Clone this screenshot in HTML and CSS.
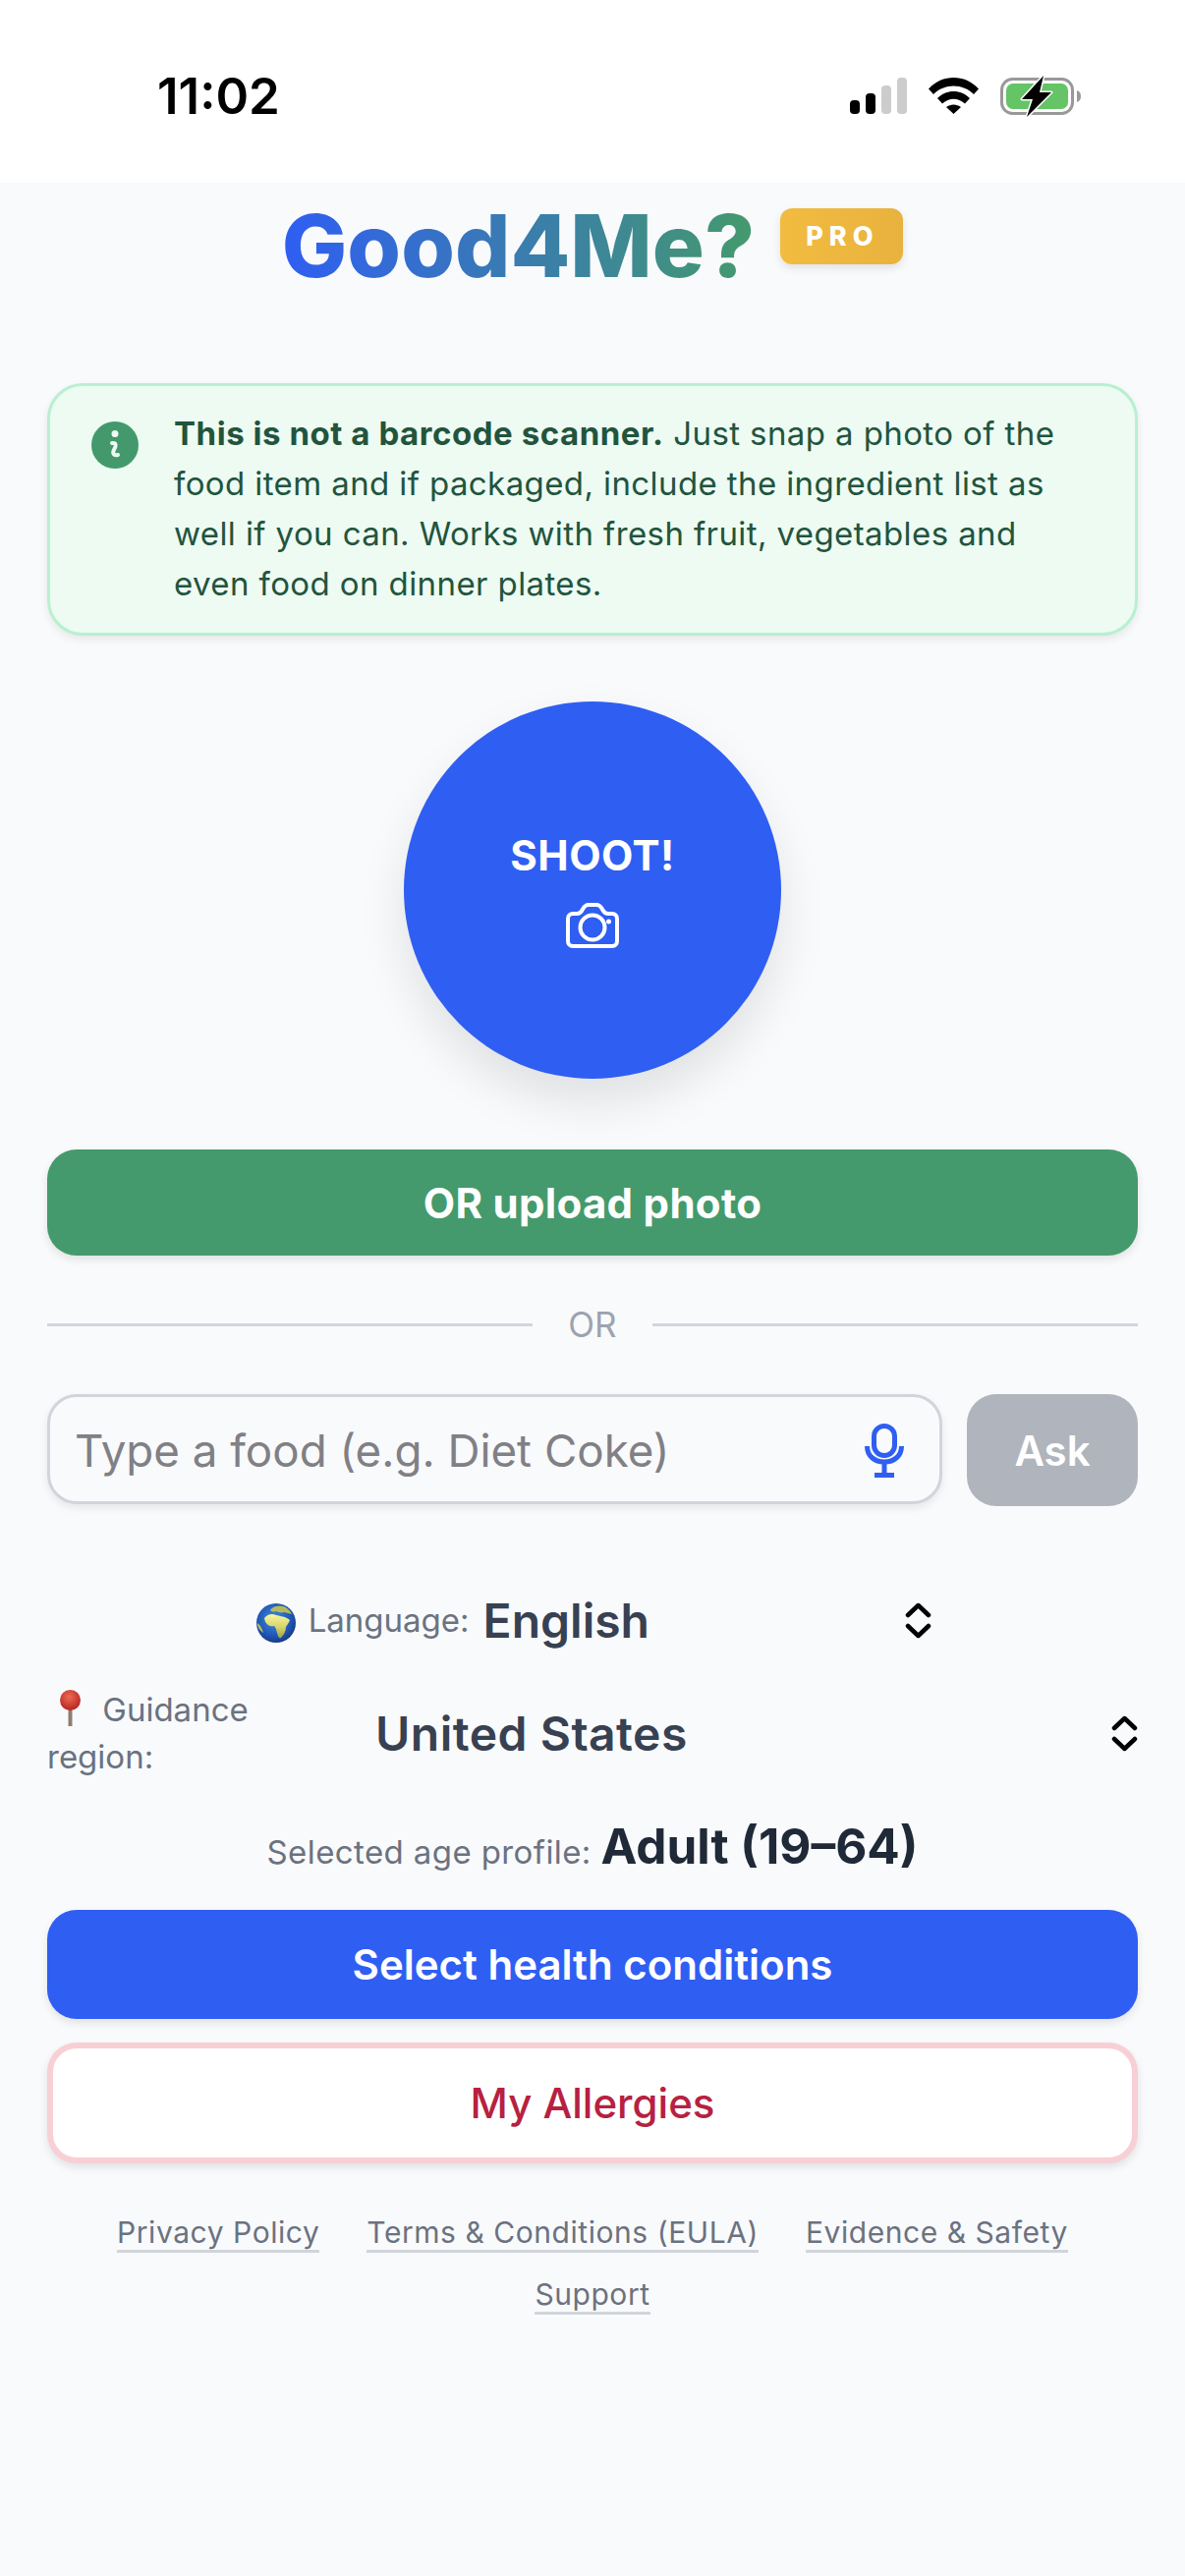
FILE: index.html
```html
<!DOCTYPE html>
<html lang="en">
<head>
  <meta charset="UTF-8">
  <meta name="viewport" content="width=device-width, initial-scale=1.0">
  <title>Good4Me?</title>
  <link rel="stylesheet" href="styles.css">
</head>
<body>

<div class="status-bar">
  <span class="time">11:02</span>
  <div class="status-icons">
    <svg class="signal" width="58" height="37" viewBox="0 0 58 37">
      <rect x="0" y="23" width="10" height="14" rx="4" fill="#000"/>
      <rect x="16" y="16" width="10" height="21" rx="4" fill="#000"/>
      <rect x="32" y="8" width="10" height="29" rx="4" fill="#ccc"/>
      <rect x="48" y="0" width="10" height="37" rx="4" fill="#ccc"/>
    </svg>
    <svg class="wifi" width="51" height="37" viewBox="0 0 51 37">
      <path d="M0 11.5 C14 -3.8 37 -3.8 51 11.5 L46 17 C35 5.5 16 5.5 5 17 Z" fill="#000"/>
      <path d="M9 21 C18 11.5 33 11.5 42 21 L37 26.500 C30 20 21 20 14 26.500 Z" fill="#000"/>
      <path d="M18 30 C22 26.500 29 26.500 33 30 L25.500 37 Z" fill="#000"/>
    </svg>
    <svg class="battery" width="82" height="42" viewBox="0 0 82 42">
      <rect x="1.500" y="3.500" width="72" height="35" rx="11" fill="none" stroke="#999" stroke-width="3"/>
      <rect x="6" y="8" width="63" height="26" rx="7" fill="#65c466"/>
      <path d="M78 15 C81 16 82 18 82 21 C82 24 81 26 78 27 Z" fill="#999"/>
      <path d="M44 0 L22 24 L33 24 L27 42 L52 17 L40 17 Z" fill="#000" stroke="#fff" stroke-width="3" stroke-linejoin="round" paint-order="stroke"/>
    </svg>
  </div>
</div>

<div class="page">
  <div class="brand">
    <h1 class="brand-title">Good4Me?</h1>
    <span class="pro-badge">PRO</span>
  </div>

  <div class="notice">
    <svg class="notice-icon" width="48" height="48" viewBox="0 0 48 48">
      <circle cx="24" cy="24" r="24" fill="#43996c"/>
      <circle cx="24" cy="12.500" r="3.500" fill="#edfbf3"/>
      <path d="M21 22 C24 21.500 25.500 23 24.500 25.500 L22.500 30 C21.500 33 23.500 35 27 34" fill="none" stroke="#edfbf3" stroke-width="4" stroke-linecap="round" stroke-linejoin="round"/>
    </svg>
    <p class="notice-text"><strong>This is not a barcode scanner.</strong> Just snap a photo of the food item and if packaged, include the ingredient list as well if you can. Works with fresh fruit, vegetables and even food on dinner plates.</p>
  </div>

  <button class="shoot">
    <span>SHOOT!</span>
    <svg width="54" height="46" viewBox="0 0 54 46" fill="none" stroke="#fff" stroke-width="4">
      <path d="M7 11 H11 C14 11 15.500 9.500 17 6.500 C18.500 3.500 20 2 23 2 H31 C34 2 35.500 3.500 37 6.500 C38.500 9.500 40 11 43 11 H47 C50 11 52 13 52 16 V39 C52 42 50 44 47 44 H7 C4 44 2 42 2 39 V16 C2 13 4 11 7 11 Z" stroke-linejoin="round"/>
      <circle cx="27" cy="25" r="12.500"/>
      <circle cx="43.500" cy="19" r="2.500" fill="#fff" stroke="none"/>
    </svg>
  </button>

  <button class="btn btn-green">OR upload photo</button>

  <div class="divider"><span>OR</span></div>

  <div class="ask-row">
    <div class="ask-input">
      <span class="placeholder">Type a food (e.g. Diet Coke)</span>
      <svg width="40" height="55" viewBox="0 0 40 55" fill="none" stroke="#2f5ef3" stroke-width="5">
        <rect x="9.500" y="2.500" width="21" height="30" rx="10.500"/>
        <path d="M2.500 23 C2.500 33 10 39 20 39 C30 39 37.500 33 37.500 23"/>
        <path d="M20 39 V51"/>
        <path d="M10 52.500 H30"/>
      </svg>
    </div>
    <button class="ask-btn">Ask</button>
  </div>

  <div class="language-row">
    <label class="field-label">
      <svg class="emoji globe" width="40" height="40" viewBox="0 0 40 40">
        <defs>
          <radialGradient id="sea" cx="45%" cy="40%" r="62%">
            <stop offset="0" stop-color="#3f8fe0"/>
            <stop offset="0.7" stop-color="#1f55b4"/>
            <stop offset="1" stop-color="#173a80"/>
          </radialGradient>
          <linearGradient id="land" x1="0" y1="0" x2="0" y2="1">
            <stop offset="0" stop-color="#f8f6a4"/>
            <stop offset="0.55" stop-color="#d6d468"/>
            <stop offset="1" stop-color="#9aa548"/>
          </linearGradient>
        </defs>
        <circle cx="20" cy="20" r="20" fill="url(#sea)"/>
        <path d="M14 7 C16 3 22 2 27 3 C31 4 34 7 36 11 C33 10 31 10 28 9 C25 10 22 9 20 8 C18 9 16 9 14 7 Z" fill="#b4ba5c"/>
        <path d="M8 15 C11 11 16 10 20 12 C23 13 27 13 31 15 L34 17 C33 20 31 22 30 24 C30 28 28 32 25 35 C23 36 22 34 21 30 C20 27 20 25 18 23 C14 24 9 22 8 15 Z" fill="url(#land)"/>
        <path d="M1 20 C4 22 6 26 7 30 C4 28 1 25 1 20 Z" fill="#b8bb58"/>
      </svg>
      Language:
    </label>
    <div class="select select-lang">
      <span>English</span>
      <svg width="27" height="37" viewBox="0 0 27 37" fill="none" stroke="#000" stroke-width="4.500" stroke-linecap="round" stroke-linejoin="round"><path d="M3 13 L13.500 3 L24 13"/><path d="M3 24 L13.500 34 L24 24"/></svg>
    </div>
  </div>

  <div class="region-row">
    <label class="field-label region-label">
      <svg class="emoji pin" width="23" height="37" viewBox="0 0 23 37">
        <defs>
          <radialGradient id="ball" cx="45%" cy="35%" r="60%">
            <stop offset="0" stop-color="#ee6a55"/>
            <stop offset="1" stop-color="#bb2a22"/>
          </radialGradient>
        </defs>
        <rect x="9.500" y="18" width="4" height="19" fill="#8d7f72"/>
        <circle cx="11.500" cy="10.500" r="10.500" fill="url(#ball)"/>
      </svg>
      Guidance region:
    </label>
    <div class="select select-region">
      <span>United States</span>
      <svg width="27" height="37" viewBox="0 0 27 37" fill="none" stroke="#000" stroke-width="4.500" stroke-linecap="round" stroke-linejoin="round"><path d="M3 13 L13.500 3 L24 13"/><path d="M3 24 L13.500 34 L24 24"/></svg>
    </div>
  </div>

  <p class="age-row">Selected age profile: <strong>Adult (19–64)</strong></p>

  <button class="btn btn-blue">Select health conditions</button>
  <button class="btn btn-allergy">My Allergies</button>

  <div class="footer-links">
    <a href="#">Privacy Policy</a>
    <a href="#">Terms &amp; Conditions (EULA)</a>
    <a href="#">Evidence &amp; Safety</a>
    <a href="#">Support</a>
  </div>
</div>

</body>
</html>
```

FILE: styles.css
```css
* {
  margin: 0;
  padding: 0;
  box-sizing: border-box;
}
body {
  font-family: Inter, "Liberation Sans", sans-serif;
  background-color: #f9fafc;
  min-height: 2622px;
}
button {
  font-family: inherit;
  border: none;
}

.status-bar {
  display: flex;
  justify-content: space-between;
  align-items: flex-start;
  height: 186px;
  padding: 73px 106px 0 160px;
  background-color: #fff;
}
.time {
  font-size: 51px;
  font-weight: 600;
  line-height: 50px;
  color: #000;
}
.status-icons {
  display: flex;
  align-items: flex-start;
  gap: 22px;
  padding-top: 6px;
}
.battery {
  margin-top: -2px;
}

.page {
  padding: 0 48px;
}

.brand {
  display: flex;
  justify-content: center;
  align-items: flex-start;
  gap: 26px;
  padding-top: 26px;
  height: 204px;
}
.brand-title {
  margin-top: -12px;
  font-size: 88.5px;
  font-weight: 800;
  line-height: 100px;
  background: linear-gradient(90deg, #2f5ef3, #449a6c);
  -webkit-background-clip: text;
  background-clip: text;
  color: transparent;
}
.pro-badge {
  display: flex;
  align-items: center;
  width: 125px;
  height: 57px;
  padding-left: 26px;
  border-radius: 12px;
  background: linear-gradient(90deg, #f2bc41, #e8b23e);
  color: #fff;
  font-size: 27px;
  font-weight: 800;
  letter-spacing: 6px;
  box-shadow: 0 4px 9px rgba(0, 0, 0, 0.1);
}

.notice {
  display: flex;
  align-items: flex-start;
  gap: 36px;
  height: 257px;
  padding: 23px 40px 0 42px;
  background-color: #edfbf3;
  border: 3px solid #b7f0d0;
  border-radius: 36px;
  box-shadow: 0 4px 9px rgba(0, 0, 0, 0.08);
}
.notice-icon {
  flex-shrink: 0;
  margin-top: 13px;
}
.notice-text {
  font-size: 33px;
  line-height: 51px;
  letter-spacing: 0.4px;
  color: #22543d;
}
.notice-text strong {
  font-weight: 700;
  letter-spacing: 0.55px;
}

.shoot {
  display: flex;
  flex-direction: column;
  align-items: center;
  gap: 23px;
  width: 384px;
  height: 384px;
  margin: 67px auto 0;
  padding-top: 132px;
  border-radius: 50%;
  background-color: #2f5ef3;
  color: #fff;
  font-size: 42px;
  font-weight: 700;
  letter-spacing: 0.5px;
  box-shadow: 0 24px 48px rgba(0, 0, 0, 0.1);
}
.shoot span {
  line-height: 50px;
}

.btn {
  display: block;
  width: 100%;
  font-size: 42px;
  font-weight: 600;
  border-radius: 30px;
  box-shadow: 0 4px 9px rgba(0, 0, 0, 0.1);
}
.btn-green {
  height: 108px;
  margin-top: 72px;
  background-color: #449a6c;
  color: #fff;
  font-weight: 700;
  letter-spacing: 0.3px;
}
.btn-blue {
  height: 111px;
  background-color: #2f5ef3;
  color: #fff;
}
.btn-allergy {
  height: 123px;
  margin-top: 24px;
  background-color: #fff;
  color: #b7213f;
  border: 6px solid #f8cfd5;
  font-weight: 500;
}

.divider {
  display: flex;
  align-items: center;
  gap: 36px;
  margin-top: 50px;
  height: 40px;
  font-size: 35px;
  color: #9ca3af;
}
.divider::before,
.divider::after {
  content: "";
  flex: 1;
  height: 3px;
  background-color: #d1d5db;
}

.ask-row {
  display: flex;
  align-items: flex-start;
  gap: 25px;
  margin-top: 51px;
}
.ask-input {
  display: flex;
  justify-content: space-between;
  align-items: center;
  flex: 1;
  height: 112px;
  padding: 2px 36px 0 25px;
  background-color: #f9fafc;
  border: 3px solid #d1d5db;
  border-radius: 30px;
  box-shadow: 0 4px 9px rgba(0, 0, 0, 0.08);
}
.placeholder {
  font-size: 45.7px;
  color: #808085;
}
.ask-btn {
  width: 174px;
  height: 114px;
  border-radius: 30px;
  background-color: #b0b4bc;
  color: #fff;
  font-size: 42px;
  font-weight: 600;
}

.field-label {
  font-size: 33px;
  line-height: 48px;
  color: #6b7280;
}
.emoji {
  vertical-align: middle;
}
.globe {
  margin: 0 3px 0 3px;
}
.pin {
  margin: -10px 12px 0 12px;
}

.select {
  display: flex;
  justify-content: space-between;
  align-items: center;
  font-size: 48px;
  font-weight: 600;
  color: #374151;
}

.language-row {
  display: flex;
  justify-content: center;
  align-items: center;
  gap: 14px;
  margin-top: 86px;
  height: 60px;
}
.select-lang {
  width: 456px;
}

.region-row {
  display: flex;
  align-items: center;
  gap: 74px;
  margin-top: 37px;
}
.region-label {
  width: 260px;
  flex-shrink: 0;
}
.select-region {
  flex: 1;
  letter-spacing: 0.5px;
}

.age-row {
  margin-top: 37px;
  text-align: center;
  font-size: 33px;
  line-height: 60px;
  letter-spacing: 0.4px;
  color: #6b7280;
}
.age-row strong {
  font-size: 49.5px;
  font-weight: 700;
  letter-spacing: 0;
  color: #1f2937;
}
.age-row + .btn {
  margin-top: 29px;
}

.footer-links {
  display: flex;
  flex-wrap: wrap;
  justify-content: center;
  gap: 24px 48px;
  margin-top: 52px;
}
.footer-links a {
  font-size: 30px;
  line-height: 36px;
  letter-spacing: 0.55px;
  color: #6b7280;
  text-decoration: none;
  border-bottom: 3px solid #d1d5db;
}
```
